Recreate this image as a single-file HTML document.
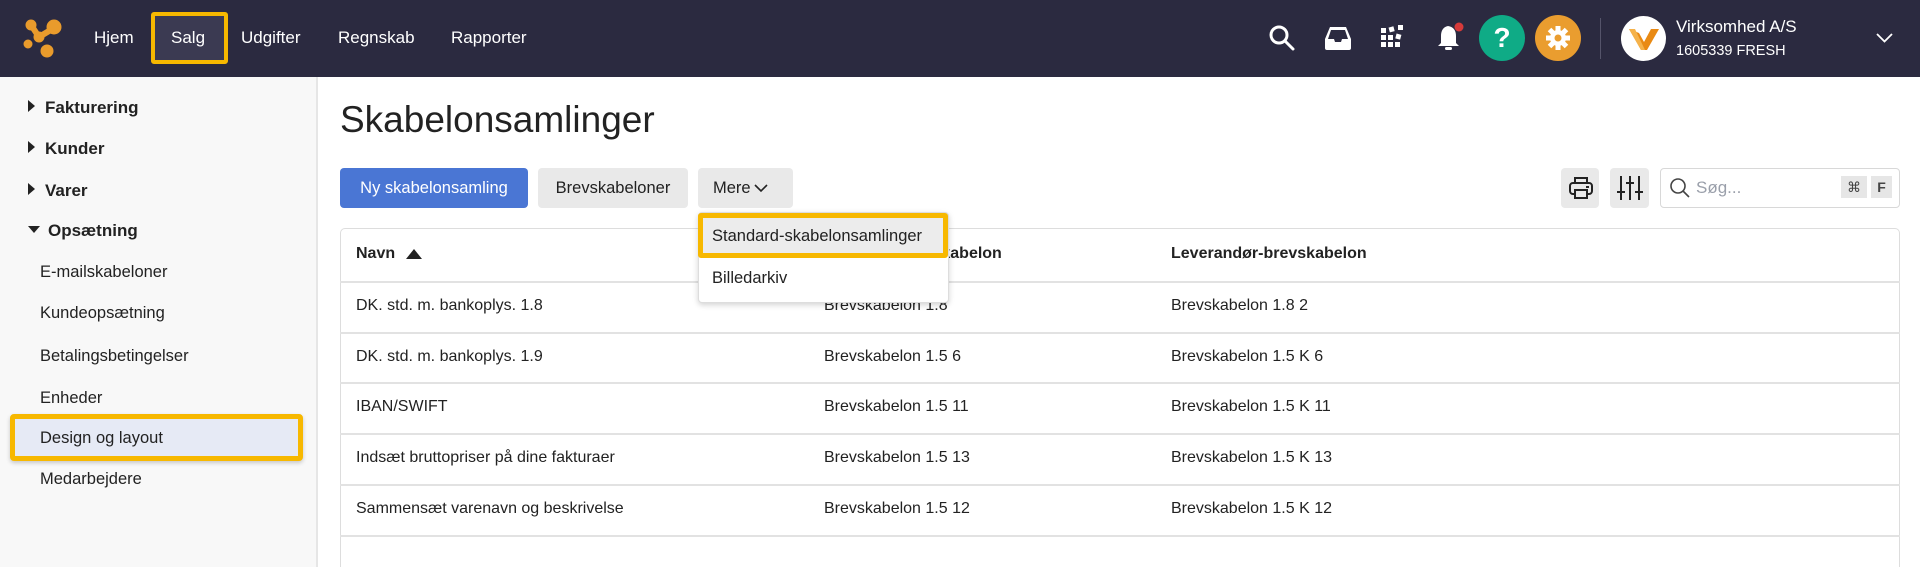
<!DOCTYPE html>
<html style="overflow:hidden;height:567px"><head><meta charset="utf-8"><style>
*{box-sizing:border-box;margin:0;padding:0}
body{width:1920px;height:567px;overflow:hidden;background:#fff;font-family:"Liberation Sans",Arial,sans-serif;color:#222;position:relative}
.hdr{position:absolute;left:0;top:0;width:1920px;height:77px;background:#2b2a40}
.nav{position:absolute;top:27px;color:#fff;font-size:17px;line-height:22px}
.abs{position:absolute}
.side{position:absolute;left:0;top:77px;width:318px;height:490px;background:#f8f8f8;border-right:2px solid #e6e6e6}
.sh{position:absolute;left:28px;font-weight:bold;font-size:17px;line-height:20px}
.sh i{display:inline-block;width:0;height:0;border-top:6px solid transparent;border-bottom:6px solid transparent;border-left:7px solid #222;margin-right:10px;vertical-align:1px}
.sh i.d{border-left:6px solid transparent;border-right:6px solid transparent;border-top:7px solid #222;border-bottom:0;margin-right:8px;vertical-align:3px}
.si{position:absolute;left:40px;font-size:16.5px;line-height:20px}
.btn{position:absolute;top:168px;height:40px;border-radius:4px;font-size:16.5px;line-height:40px;text-align:center}
.tbl{position:absolute;left:340px;top:228px;width:1560px;height:345px;border:1px solid #ddd;border-radius:5px}
.row{position:absolute;left:340px;width:1560px;border-top:2px solid #e2e2e2}
.c{position:absolute;font-size:16px;line-height:20px}
.b{font-weight:bold}
</style></head><body>
<div class="hdr"></div>
<svg class="abs" style="left:20px;top:14px" width="44" height="46" viewBox="20 14 44 46">
<g fill="#e99b2c" stroke="#e99b2c"><line x1="31" y1="25" x2="39" y2="37" stroke-width="6"/><line x1="39" y1="37" x2="54" y2="28" stroke-width="6"/>
<circle cx="31" cy="25" r="5"/><circle cx="54" cy="27" r="7"/><circle cx="39" cy="37" r="5"/><circle cx="28" cy="44" r="4"/><circle cx="47" cy="51" r="6"/></g></svg>
<div class="nav" style="left:94px">Hjem</div>
<div class="abs" style="left:151px;top:12px;width:77px;height:52px;border:4px solid #f7b800;border-radius:3px;background:#3b3a52"></div>
<div class="nav" style="left:171px">Salg</div>
<div class="nav" style="left:241px">Udgifter</div>
<div class="nav" style="left:338px">Regnskab</div>
<div class="nav" style="left:451px">Rapporter</div>
<svg class="abs" style="left:1268px;top:24px" width="28" height="28" viewBox="0 0 28 28"><circle cx="11" cy="11" r="8" fill="none" stroke="#fff" stroke-width="3"/><line x1="17" y1="17" x2="25" y2="25" stroke="#fff" stroke-width="3" stroke-linecap="round"/></svg>
<svg class="abs" style="left:1324px;top:25px" width="28" height="26" viewBox="0 0 28 26"><path d="M6 2h16l5 12v9a2 2 0 0 1-2 2H3a2 2 0 0 1-2-2v-9z" fill="#fff"/><path d="M7 5h14l3 9h-6l-1 3h-6l-1-3H4z" fill="#2b2a40"/></svg>
<svg class="abs" style="left:1380px;top:24px" width="26" height="28" viewBox="0 0 26 28"><g fill="#fff"><rect x="1" y="11" width="5" height="5"/><rect x="8" y="11" width="5" height="5"/><rect x="1" y="18" width="5" height="5"/><rect x="8" y="18" width="5" height="5"/><rect x="15" y="18" width="5" height="5"/><rect x="1" y="4" width="5" height="5"/><rect x="9" y="3" width="5" height="5" transform="rotate(-15 11 5)"/><rect x="16" y="10" width="5" height="5" transform="rotate(15 18 12)"/><rect x="18" y="1" width="5" height="5"/></g></svg>
<svg class="abs" style="left:1436px;top:22px" width="30" height="30" viewBox="0 0 30 30"><path d="M12 4c-5 1-7 5-7 10v7l-3 3h21l-3-3v-7c0-5-2-9-8-10z" fill="#fff"/><rect x="9" y="25" width="7" height="3" rx="1.5" fill="#fff"/><circle cx="23" cy="5" r="4.5" fill="#d63a3a"/></svg>
<div class="abs" style="left:1479px;top:15px;width:46px;height:46px;border-radius:50%;background:#0fab86;color:#fff;font-weight:bold;font-size:28px;line-height:46px;text-align:center">?</div>
<div class="abs" style="left:1535px;top:15px;width:46px;height:46px;border-radius:50%;background:#ea9d2f"></div>
<svg class="abs" style="left:1544px;top:24px" width="28" height="28" viewBox="-14 -14 28 28"><g fill="#fff"><circle r="8"/><rect x="-2.5" y="-12" width="5" height="24"/><rect x="-2.5" y="-12" width="5" height="24" transform="rotate(45)"/><rect x="-2.5" y="-12" width="5" height="24" transform="rotate(90)"/><rect x="-2.5" y="-12" width="5" height="24" transform="rotate(135)"/></g><circle r="3.5" fill="#ea9d2f"/></svg>
<div class="abs" style="left:1600px;top:18px;width:1px;height:41px;background:#55546a"></div>
<div class="abs" style="left:1621px;top:16px;width:45px;height:45px;border-radius:50%;background:#fff"></div>
<svg class="abs" style="left:1627px;top:26px" width="34" height="26" viewBox="0 0 34 26"><path d="M2 3l12 21h6L32 3h-8l-7 13-5-9z" fill="#e98a14"/><path d="M2 3l12 21h4L8 3z" fill="#f5b24a"/></svg>
<div class="abs" style="left:1676px;top:17px;color:#fff;font-size:17px;line-height:20px">Virksomhed A/S</div>
<div class="abs" style="left:1676px;top:42px;color:#fff;font-size:14.5px;line-height:18px">1605339 FRESH</div>
<svg class="abs" style="left:1876px;top:32px" width="17" height="12" viewBox="0 0 17 12"><path d="M1 2l7.5 7.5L16 2" fill="none" stroke="#fff" stroke-width="1.8"/></svg>

<div class="side"></div>
<div class="sh" style="top:98px"><i></i>Fakturering</div>
<div class="sh" style="top:139px"><i></i>Kunder</div>
<div class="sh" style="top:181px"><i></i>Varer</div>
<div class="sh" style="top:221px"><i class="d"></i>Opsætning</div>
<div class="si" style="top:262px">E-mailskabeloner</div>
<div class="si" style="top:303px">Kundeopsætning</div>
<div class="si" style="top:346px">Betalingsbetingelser</div>
<div class="si" style="top:388px">Enheder</div>
<div class="abs" style="left:10px;top:414px;width:293px;height:47px;border:5px solid #f7b800;border-radius:4px;background:#e6eaf5;box-shadow:0 2px 4px rgba(0,0,0,.2)"></div>
<div class="si" style="top:428px">Design og layout</div>
<div class="si" style="top:469px">Medarbejdere</div>

<div class="abs" style="left:340px;top:98px;font-size:37px;line-height:44px;color:#222">Skabelonsamlinger</div>
<div class="btn" style="left:340px;width:188px;background:#4a76d4;color:#fff">Ny skabelonsamling</div>
<div class="btn" style="left:538px;width:150px;background:#e9e9e9">Brevskabeloner</div>
<div class="btn" style="left:698px;width:95px;background:#e9e9e9;text-align:left;padding-left:15px">Mere<svg style="position:absolute;left:56px;top:16px" width="14" height="9" viewBox="0 0 14 9"><path d="M1 1l6 6 6-6" fill="none" stroke="#222" stroke-width="1.6"/></svg></div>
<div class="btn" style="left:1561px;width:38px;background:#e9e9e9"></div>
<svg class="abs" style="left:1568px;top:175px" width="26" height="26" viewBox="0 0 26 26"><g fill="none" stroke="#222" stroke-width="2"><path d="M7 8V3h12v5"/><rect x="2" y="8" width="22" height="11" rx="3"/><rect x="7" y="15" width="12" height="8" fill="#e9e9e9"/></g><line x1="18" y1="12" x2="21" y2="12" stroke="#222" stroke-width="2"/></svg>
<div class="btn" style="left:1610px;width:39px;background:#e9e9e9"></div>
<svg class="abs" style="left:1616px;top:174px" width="28" height="28" viewBox="0 0 28 28"><g stroke="#222" stroke-width="2"><line x1="5" y1="2" x2="5" y2="26"/><line x1="14" y1="2" x2="14" y2="26"/><line x1="23" y1="2" x2="23" y2="26"/><line x1="1" y1="18" x2="9" y2="18"/><line x1="10" y1="9" x2="18" y2="9"/><line x1="19" y1="18" x2="27" y2="18"/></g></svg>
<div class="abs" style="left:1660px;top:168px;width:240px;height:40px;border:1px solid #d8d8d8;border-radius:4px"></div>
<svg class="abs" style="left:1669px;top:177px" width="22" height="22" viewBox="0 0 22 22"><circle cx="9" cy="9" r="7" fill="none" stroke="#444" stroke-width="1.6"/><line x1="14" y1="14" x2="20" y2="20" stroke="#444" stroke-width="1.6"/></svg>
<div class="abs" style="left:1696px;top:178px;font-size:17px;line-height:20px;color:#9a9faa">Søg...</div>
<div class="abs" style="left:1841px;top:176px;width:26px;height:22px;background:#e6e6e6;font-size:14px;line-height:22px;text-align:center;color:#444">⌘</div>
<div class="abs" style="left:1871px;top:176px;width:21px;height:22px;background:#e6e6e6;font-size:14px;line-height:22px;text-align:center;color:#444;font-weight:bold">F</div>

<div class="tbl"></div>
<div class="c b" style="left:356px;top:244px">Navn</div>
<svg class="abs" style="left:406px;top:249px" width="16" height="11" viewBox="0 0 16 11"><path d="M8 0l8 10H0z" fill="#222"/></svg>
<div class="c b" style="left:824px;top:244px">Standard-brevskabelon</div>
<div class="c b" style="left:1171px;top:244px">Leverandør-brevskabelon</div>
<div class="row" style="top:281px"></div>
<div class="row" style="top:332px"></div>
<div class="row" style="top:382px"></div>
<div class="row" style="top:433px"></div>
<div class="row" style="top:484px"></div>
<div class="row" style="top:535px"></div>
<div class="c" style="left:356px;top:296px">DK. std. m. bankoplys. 1.8</div><div class="c" style="left:824px;top:296px">Brevskabelon 1.8</div><div class="c" style="left:1171px;top:296px">Brevskabelon 1.8 2</div>
<div class="c" style="left:356px;top:347px">DK. std. m. bankoplys. 1.9</div><div class="c" style="left:824px;top:347px">Brevskabelon 1.5 6</div><div class="c" style="left:1171px;top:347px">Brevskabelon 1.5 K 6</div>
<div class="c" style="left:356px;top:397px">IBAN/SWIFT</div><div class="c" style="left:824px;top:397px">Brevskabelon 1.5 11</div><div class="c" style="left:1171px;top:397px">Brevskabelon 1.5 K 11</div>
<div class="c" style="left:356px;top:448px">Indsæt bruttopriser på dine fakturaer</div><div class="c" style="left:824px;top:448px">Brevskabelon 1.5 13</div><div class="c" style="left:1171px;top:448px">Brevskabelon 1.5 K 13</div>
<div class="c" style="left:356px;top:499px">Sammensæt varenavn og beskrivelse</div><div class="c" style="left:824px;top:499px">Brevskabelon 1.5 12</div><div class="c" style="left:1171px;top:499px">Brevskabelon 1.5 K 12</div>

<div class="abs" style="left:698px;top:212px;width:251px;height:91px;background:#fff;border:1px solid #ddd;border-radius:4px;box-shadow:0 2px 6px rgba(0,0,0,.18)"></div>
<div class="abs" style="left:698px;top:213px;width:250px;height:45px;border:5px solid #f7b800;border-radius:3px;background:#ececec"></div>
<div class="c" style="left:712px;top:226px;font-size:16.5px">Standard-skabelonsamlinger</div>
<div class="c" style="left:712px;top:268px;font-size:16.5px">Billedarkiv</div>
</body></html>
